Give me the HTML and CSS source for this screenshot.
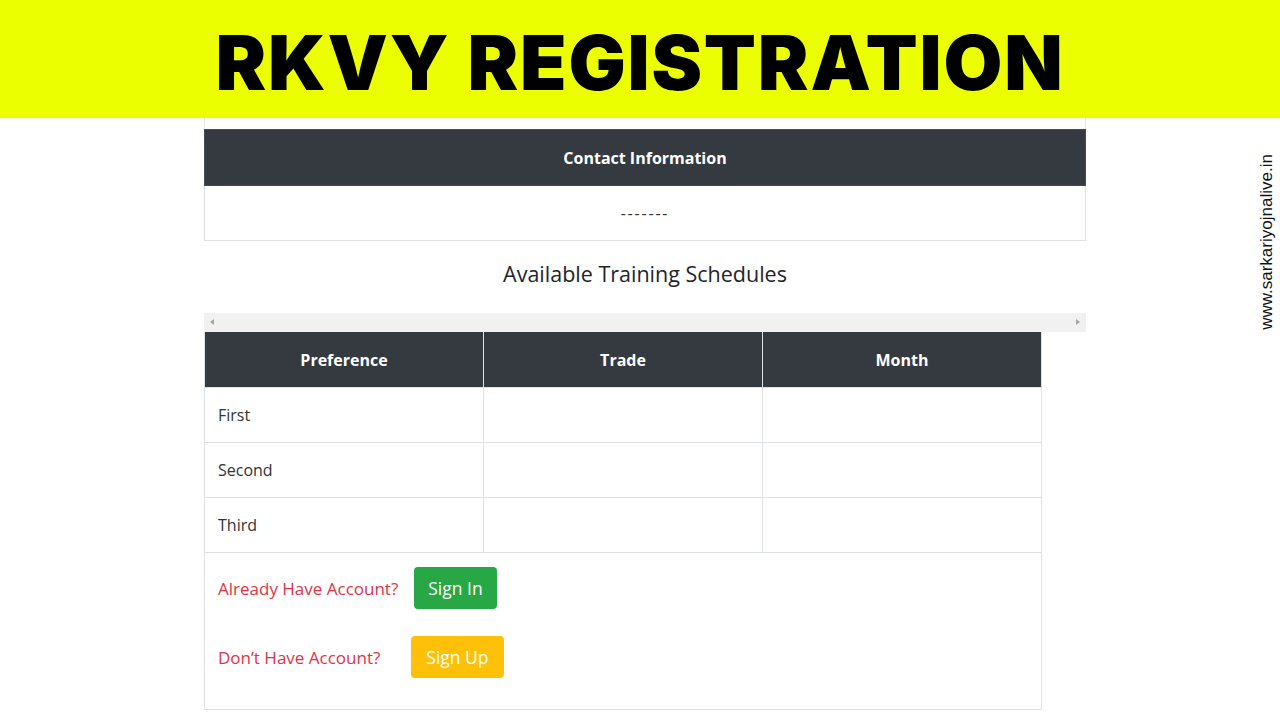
FILE: index.html
```html
<!DOCTYPE html>
<html>
<head>
<meta charset="utf-8">
<link rel="stylesheet" href="styles.css">
</head>
<body>
<header class="banner"><h1>RKVY REGISTRATION</h1></header>
<main class="content">
  <div class="top-strip"></div>
  <table class="info">
    <tr><th>Contact Information</th></tr>
    <tr><td class="dashes">-------</td></tr>
  </table>
  <h2 class="section-title">Available Training Schedules</h2>
  <div class="scrollbar">
    <span class="arrow left"></span>
    <span class="arrow right"></span>
  </div>
  <table class="schedule">
    <tr><th>Preference</th><th>Trade</th><th>Month</th></tr>
    <tr><td>First</td><td></td><td></td></tr>
    <tr><td>Second</td><td></td><td></td></tr>
    <tr><td>Third</td><td></td><td></td></tr>
    <tr><td colspan="3" class="account">
      <div class="acc-box">
        <div class="acc-row"><span class="acc-label">Already Have Account?</span><a class="btn btn-green">Sign In</a></div>
        <div class="acc-row"><span class="acc-label">Don’t Have Account?</span><a class="btn btn-yellow">Sign Up</a></div>
      </div>
    </td></tr>
  </table>
</main>
<div class="watermark">www.sarkariyojnalive.in</div>
</body>
</html>
```
FILE: styles.css
```css
html, body { margin: 0; padding: 0; background: #fff; }
body { font-family: "Open Sans", "Noto Sans", sans-serif; color: #212529; width: 1280px; height: 720px; overflow: hidden; position: relative; }
.banner { height: 118px; box-sizing: border-box; padding-top: 6px; background: #ebff00; display: flex; align-items: center; justify-content: center; }
.banner h1 { margin: 0; font-family: Inter, "Lato", sans-serif; font-weight: 900; font-size: 76px; letter-spacing: 1.8px; color: #000; line-height: 1; }
.content { margin-left: 204px; width: 882px; }
.top-strip { height: 11px; border: 1px solid #e6e6e6; border-top: none; border-bottom: none; }
table { border-collapse: collapse; }
.info { width: 882px; }
.info th { background: #343a40; color: #fff; height: 55px; padding: 0; font-size: 16px; font-weight: 700; border: 1px solid #454d55; }
.info td { height: 54px; padding: 0; text-align: center; border: 1px solid #dee2e6; font-size: 16px; color: #333; }
.info td.dashes { letter-spacing: 1.8px; }
.section-title { margin: 0; height: 72px; padding-bottom: 8px; box-sizing: border-box; display: flex; align-items: center; justify-content: center; font-size: 21.5px; font-weight: 400; color: #212529; }
.scrollbar { height: 19px; background: #f1f1f1; position: relative; }
.arrow { position: absolute; top: 6px; width: 0; height: 0; border-top: 3.5px solid transparent; border-bottom: 3.5px solid transparent; }
.arrow.left { left: 6px; border-right: 4px solid #a3a3a3; }
.arrow.right { right: 6px; border-left: 4px solid #a3a3a3; }
.schedule { width: 838px; table-layout: fixed; }
.schedule th { background: #343a40; color: #fff; height: 55px; padding: 0; font-size: 16px; font-weight: 700; border: 1px solid #dee2e6; border-top: none; }
.schedule td { height: 54px; padding: 0 0 0 13px; border: 1px solid #dee2e6; font-size: 16px; color: #333; }
.schedule td.account { height: auto; padding: 0; vertical-align: top; }
.acc-box { height: 156px; box-sizing: border-box; padding: 14px 13px 0 13px; }
.acc-row { display: flex; align-items: center; height: 42px; }
.acc-row + .acc-row { margin-top: 27px; }
.acc-label { color: #dc3545; font-size: 17px; margin-right: 16px; }
.btn { display: inline-flex; align-items: center; justify-content: center; height: 42px; border-radius: 4px; color: #fff; font-size: 17.5px; padding: 0 14px; }
.btn-green { background: #28a745; }
.btn-yellow { background: #ffc107; margin-left: 15px; padding: 0 15px; }
.watermark { position: absolute; left: 1267px; top: 242px; transform: translate(-50%, -50%) rotate(-90deg); font-family: "Liberation Sans", Arial, sans-serif; font-size: 17px; color: #111; white-space: nowrap; }
```
